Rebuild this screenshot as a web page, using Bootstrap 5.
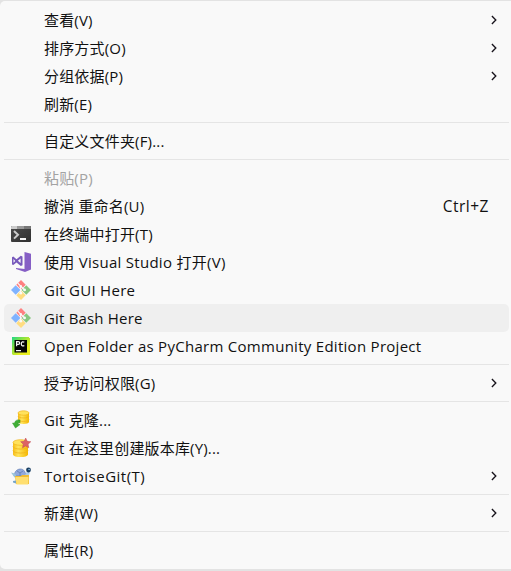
<!DOCTYPE html>
<html lang="zh-CN">
<head>
<meta charset="utf-8">
<meta name="viewport" content="width=device-width, initial-scale=1">
<title>菜单</title>
<link href="https://cdn.jsdelivr.net/npm/bootstrap@5.3.0/dist/css/bootstrap.min.css" rel="stylesheet">
<style>
html,body{height:571px;overflow:hidden}
body{background:#e3e3e3;font-family:"Open Sans","Noto Sans CJK SC",sans-serif;font-size:15px;color:#111}
.ctx-menu{height:568px;margin-top:1px;padding:5px 2px 0 4px;background:#f9f9f9;border-radius:5px 0 0 5px;list-style:none}
.ctx-menu .dropdown-item{height:28px;padding:0 12px 0 7px;font-size:15px;line-height:28px;color:#111;letter-spacing:.18px;border-radius:5px;background:transparent}
.ctx-menu .dropdown-item.current{background:#efefef}
.ctx-menu .dropdown-item.disabled{color:#a3a3a3}
.ctx-menu .dropdown-divider{height:1px;margin:4px 0;border:0;background:#e5e5e5;opacity:1}
.pic{width:20px;height:20px;margin-right:13px;flex:none}
.arrow{width:6px;height:10px}
.keys{margin-right:8px;font-size:15.5px;letter-spacing:.5px}
.wide{letter-spacing:.28px}
.wider{letter-spacing:.5px}
</style>
<script src="https://cdn.jsdelivr.net/npm/bootstrap@5.3.0/dist/js/bootstrap.bundle.min.js"></script>
</head>
<body>
<svg width="0" height="0" class="position-absolute" aria-hidden="true">
<defs>
<linearGradient id="gold"><stop stop-color="#f7bd18"/><stop offset=".35" stop-color="#ffe45c"/><stop offset="1" stop-color="#f5b800"/></linearGradient>
<linearGradient id="pyc" x2="1" y2="1"><stop stop-color="#20d789"/><stop offset=".35" stop-color="#8be33f"/><stop offset=".7" stop-color="#e8ee20"/></linearGradient>
<linearGradient id="term" y2="1" x2="1"><stop stop-color="#4b4b4b"/><stop offset="1" stop-color="#303030"/></linearGradient>
<symbol id="arrow" viewBox="0 0 6 10"><path d="M.9 1 4.800 5 .9 9" fill="none" stroke="#18141c" stroke-width="1.350"/></symbol>
<symbol id="git" viewBox="0 0 20 20">
<path d="M10 0 14.700 4.700 10 9.400 5.300 4.700z" fill="#ff8080"/><path d="M4.700 5.300 9.400 10 4.700 14.700 0 10z" fill="#80b3ff"/><path d="M10 10.600 14.700 15.300 10 20 5.300 15.300z" fill="#ffdd80"/><path d="M15.300 5.300 20 10 15.300 14.700 10.600 10z" fill="#87c780"/>
<path d="M6.800 3.200 9.600 6V13M9.600 6l4 4" stroke="#f9f9f9" stroke-width="1.100" fill="none"/><circle cx="9.800" cy="6.300" r="1.200" fill="#f9f9f9"/><circle cx="9.800" cy="13.200" r="1.400" fill="#f9f9f9"/><circle cx="13.600" cy="9.900" r="1.400" fill="#f9f9f9"/></symbol>
</defs></svg>
<ul class="ctx-menu mb-0">
<li><a class="dropdown-item d-flex align-items-center"><span class="pic"></span><span class="me-auto">查看(V)</span><svg class="arrow"><use href="#arrow"/></svg></a></li>
<li><a class="dropdown-item d-flex align-items-center"><span class="pic"></span><span class="me-auto">排序方式(O)</span><svg class="arrow"><use href="#arrow"/></svg></a></li>
<li><a class="dropdown-item d-flex align-items-center"><span class="pic"></span><span class="me-auto">分组依据(P)</span><svg class="arrow"><use href="#arrow"/></svg></a></li>
<li><a class="dropdown-item d-flex align-items-center"><span class="pic"></span><span>刷新(E)</span></a></li>
<li><hr class="dropdown-divider"></li>
<li><a class="dropdown-item d-flex align-items-center"><span class="pic"></span><span>自定义文件夹(F)...</span></a></li>
<li><hr class="dropdown-divider"></li>
<li><a class="dropdown-item disabled d-flex align-items-center"><span class="pic"></span><span>粘贴(P)</span></a></li>
<li><a class="dropdown-item d-flex align-items-center"><span class="pic"></span><span class="me-auto">撤消 重命名(U)</span><span class="keys">Ctrl+Z</span></a></li>
<li><a class="dropdown-item d-flex align-items-center"><svg class="pic" viewBox="0 0 20 20"><path d="M0 3a1 1 0 0 1 1-1h18a1 1 0 0 1 1 1v14a1 1 0 0 1-1 1H1a1 1 0 0 1-1-1z" fill="url(#term)"/><path d="M0 5V3a1 1 0 0 1 1-1h5v3z" fill="#ccc"/><path d="M6 2h7v3H6z" fill="#999"/><path d="M13 2h6a1 1 0 0 1 1 1v2h-7z" fill="#777"/><path d="m3 7 4 3.800L3 14.600" fill="none" stroke="#ccc" stroke-width="2"/><path d="M9 14h6v2H9z" fill="#f5f5f5"/></svg><span>在终端中打开(T)</span></a></li>
<li><a class="dropdown-item d-flex align-items-center"><svg class="pic" viewBox="0 0 20 20"><path d="m13.500 0 6.500 1.800v15.700L14 20l-9-3v-1l8.500 1z" fill="#865fc5"/><path fill-rule="evenodd" d="M1 5.300 2.300 4.600 5.500 7.200 9.800 3.700 11.500 4.500v8.700l-1.700.8L5.500 10.500 2.300 13 1 12.400zM2.500 7.100v3.600L4.300 8.900zM9.600 6.600 6.900 8.800l2.700 2.300z" fill="#7859bc"/></svg><span class="wide">使用 Visual Studio 打开(V)</span></a></li>
<li><a class="dropdown-item d-flex align-items-center"><svg class="pic"><use href="#git"/></svg><span class="wide">Git GUI Here</span></a></li>
<li><a class="dropdown-item current d-flex align-items-center"><svg class="pic"><use href="#git"/></svg><span>Git Bash Here</span></a></li>
<li><a class="dropdown-item d-flex align-items-center"><svg class="pic" viewBox="0 0 20 20"><path d="M1 1h17v1h1v17H2L1 18z" fill="url(#pyc)"/><path d="M3.500 4h12.500v12.500H3.500z" fill="#050505"/><path d="M5.600 10.300v-4.800h1.700a1.300 1.300 0 0 1 0 2.800H5.600M13.300 6.300c-1.200-1-3-.6-3 1.600s1.800 2.500 3 1.600M5 14.500h5" fill="none" stroke="#f5f5f5" stroke-width="1.250"/></svg><span class="wide">Open Folder as PyCharm Community Edition Project</span></a></li>
<li><hr class="dropdown-divider"></li>
<li><a class="dropdown-item d-flex align-items-center"><span class="pic"></span><span class="me-auto">授予访问权限(G)</span><svg class="arrow"><use href="#arrow"/></svg></a></li>
<li><hr class="dropdown-divider"></li>
<li><a class="dropdown-item d-flex align-items-center"><svg class="pic" viewBox="0 0 20 20"><path d="M7 3v9c0 2.600 11 2.600 11 0V3z" fill="url(#gold)"/><ellipse cx="12.500" cy="3" rx="5.500" ry="2.200" fill="#ffe25c" stroke="#f0b51d" stroke-width=".7"/><path d="M7 6c0 2.600 11 2.600 11 0M7 9.500c0 2.600 11 2.600 11 0" fill="none" stroke="#f0b51d" stroke-width=".8"/><path d="M9 10c-3-.5-5 .5-5.500 3.200L1.500 13l3 5L9 14.600l-2-.6c.2-1 1-1.500 2-1.300z" fill="#3fae35" stroke="#2b962a" stroke-width=".5"/></svg><span>Git 克隆...</span></a></li>
<li><a class="dropdown-item d-flex align-items-center"><svg class="pic" viewBox="0 0 20 20"><path d="M2 4.500v12c0 3.400 15 3.400 15 0v-12z" fill="url(#gold)"/><ellipse cx="9.500" cy="4.500" rx="7.500" ry="2.800" fill="#ffe25c" stroke="#f0b51d" stroke-width=".7"/><path d="M2 8.500c0 3.400 15 3.400 15 0M2 12.500c0 3.400 15 3.400 15 0" fill="none" stroke="#f0b51d" stroke-width=".9"/><path d="m14.700 0 1.500 3.300 3.600.4-2.700 2.500.7 3.600-3.100-1.900-3.200 1.900.8-3.600-2.700-2.500 3.600-.4z" fill="#dc6365" stroke="#c24d54" stroke-width=".5"/></svg><span>Git 在这里创建版本库(Y)...</span></a></li>
<li><a class="dropdown-item d-flex align-items-center"><svg class="pic" viewBox="0 0 20 20"><path d="M3 10c.5-4.500 3-7 6.500-7s5 3 5.500 7z" fill="#91a9dc" stroke="#5d78ae" stroke-width=".6"/><path d="m6 5 3 2 3-2M9 7v3" fill="none" stroke="#5d78ae" stroke-width=".7"/><path d="m14 9 2-3.500 3 .8-1.500 4z" fill="#a9cbe9"/><circle cx="17.500" cy="4" r="2.400" fill="#173d61"/><circle cx="18.100" cy="3.500" r=".8" fill="#91c4e4"/><path d="m0 6.500 4 1 1.500 3-2 1z" fill="#9bc4d9"/><path d="M4 10h6l1-1h7v9H5z" fill="#efbc33"/><path d="M4.500 11h13l-.3 7.500H5.500z" fill="#ffdf70"/><path d="m2 15 3-.5v3l-3-1z" fill="#78a6ca"/></svg><span class="me-auto wider">TortoiseGit(T)</span><svg class="arrow"><use href="#arrow"/></svg></a></li>
<li><hr class="dropdown-divider"></li>
<li><a class="dropdown-item d-flex align-items-center"><span class="pic"></span><span class="me-auto wide">新建(W)</span><svg class="arrow"><use href="#arrow"/></svg></a></li>
<li><hr class="dropdown-divider"></li>
<li><a class="dropdown-item d-flex align-items-center"><span class="pic"></span><span class="wide">属性(R)</span></a></li>
</ul>
</body>
</html>
